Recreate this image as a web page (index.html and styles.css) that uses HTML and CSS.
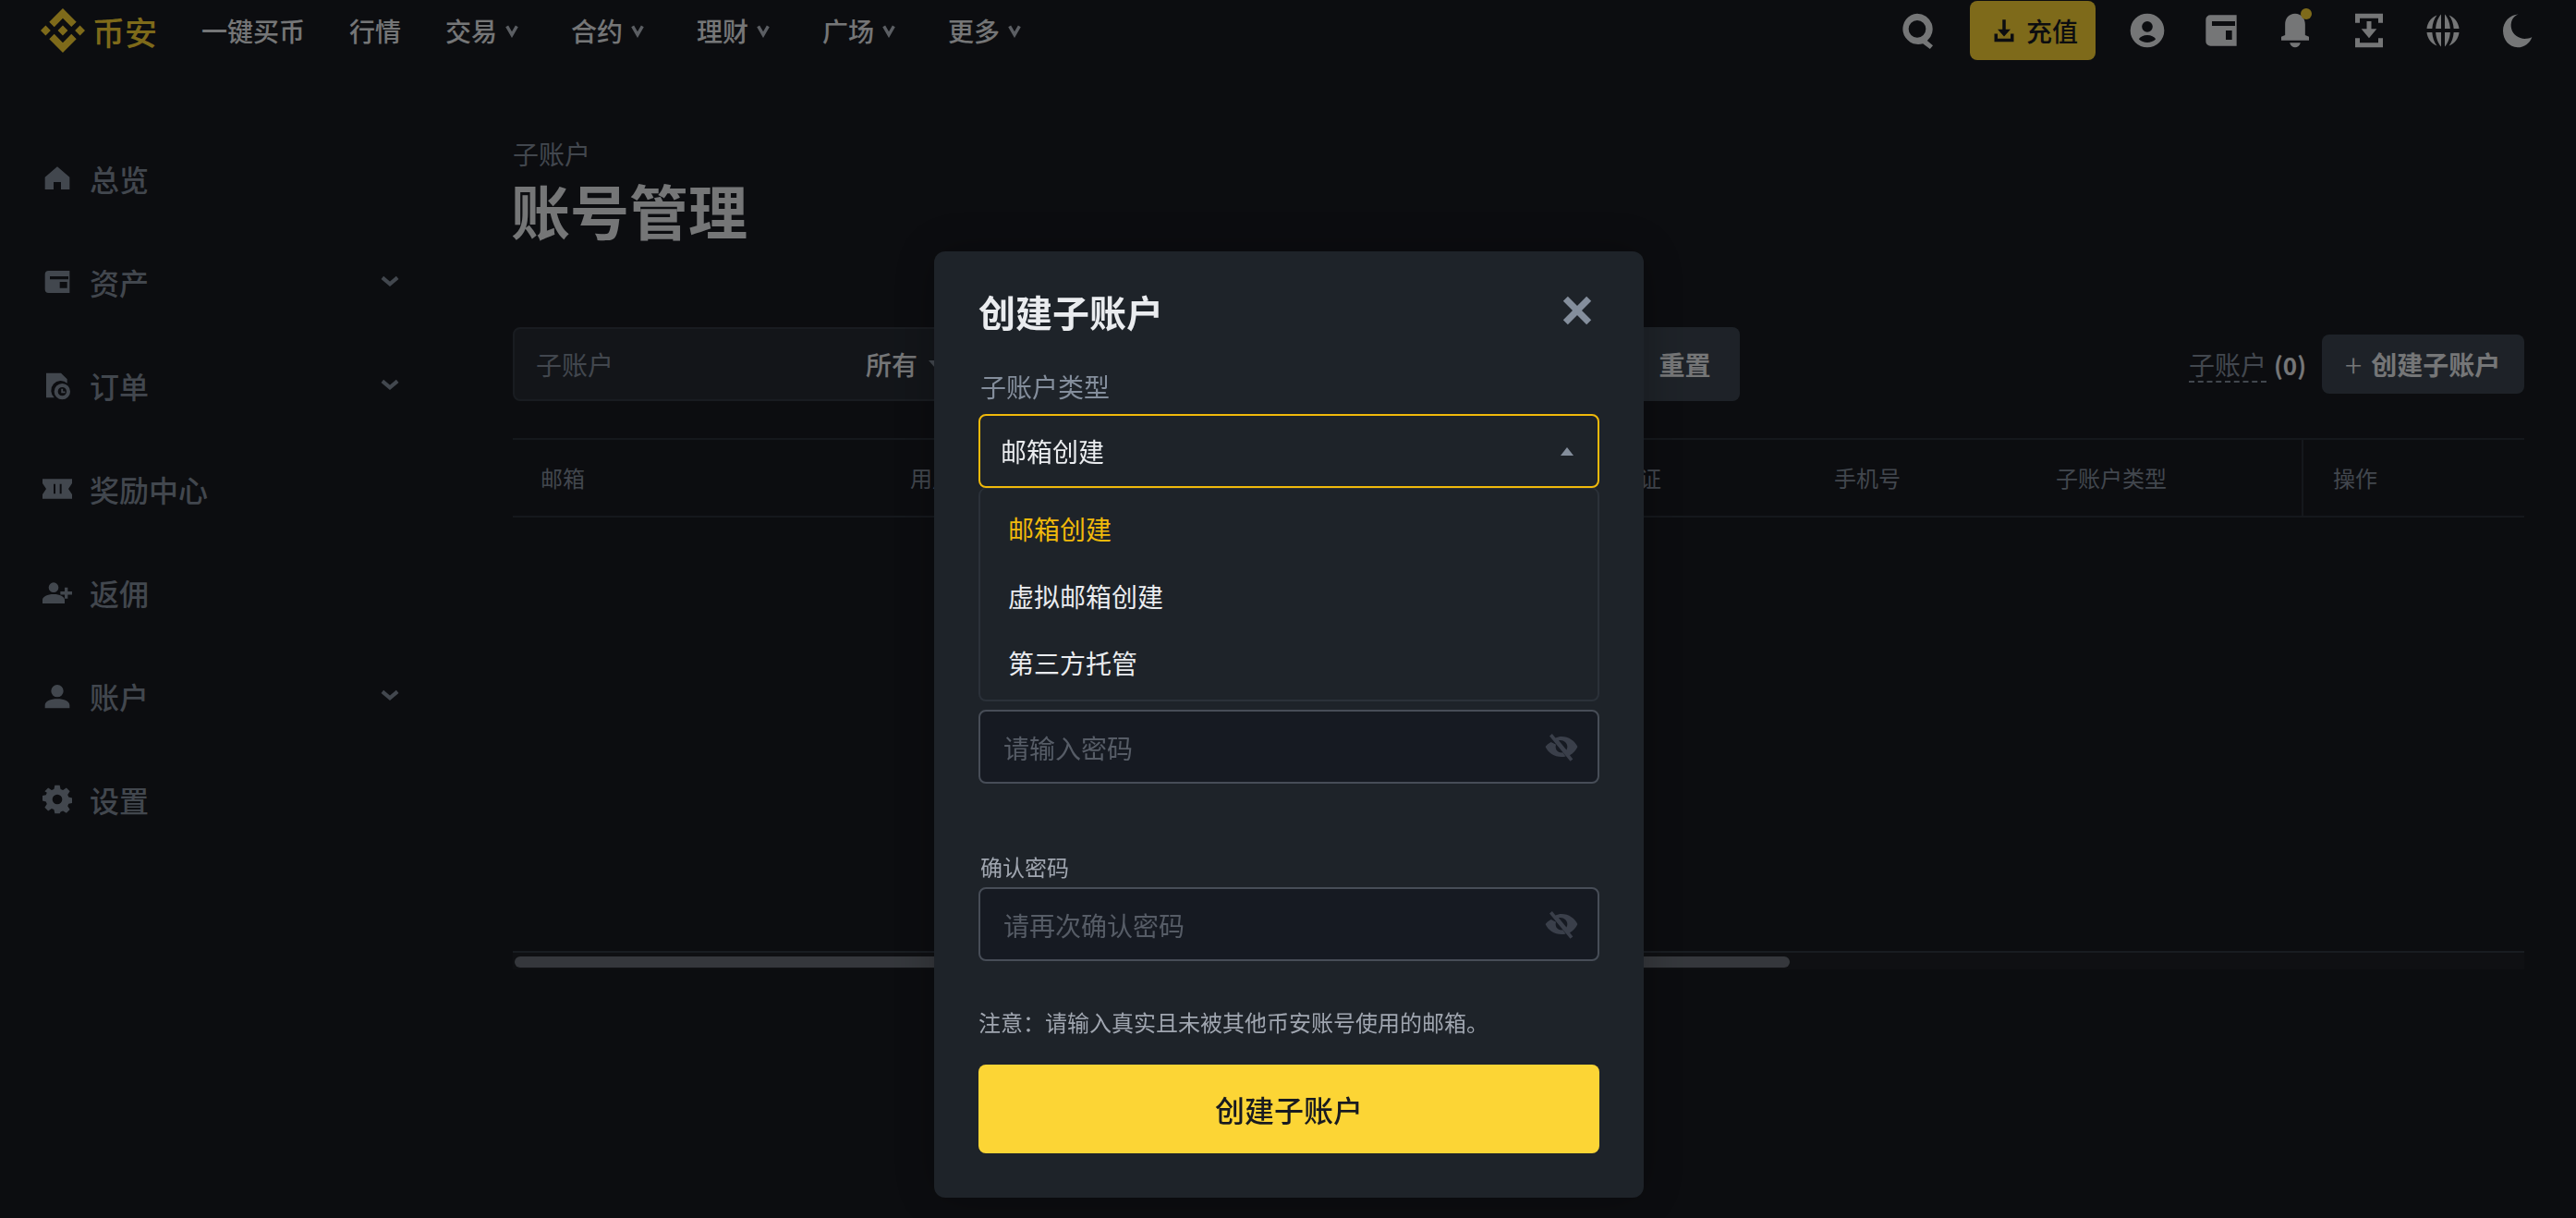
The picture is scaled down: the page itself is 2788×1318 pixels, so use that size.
FILE: index.html
```html
<!DOCTYPE html>
<html lang="zh-CN">
  <head>
    <meta charset="UTF-8" />
    <title>账号管理</title>
    <link rel="stylesheet" href="styles.css">
  </head>
  <body>
    <header class="topBar">
      <a class="brand">
        <svg class="brandIcon" viewBox="0 0 24 24"><path d="M16.624 13.92l2.718 2.716-7.353 7.353-7.353-7.352 2.717-2.717 4.636 4.66 4.635-4.66zm4.637-4.636L24 12l-2.715 2.716L18.568 12l2.693-2.716zm-9.272.001l2.716 2.691-2.716 2.718L9.272 12l2.717-2.715zm-9.272-.001L5.409 12l-2.691 2.692L0 12l2.717-2.716zM11.989.012l7.353 7.329-2.718 2.715-4.635-4.635-4.636 4.659-2.717-2.715L11.989.012z"/></svg>
        <span>币安</span>
      </a>
      <nav class="topNav">
        <a>一键买币</a>
        <a>行情</a>
        <a class="hasMenu">交易<svg viewBox="0 0 12 12"><path d="M2 2.500l4 7 4-7"/></svg></a>
        <a class="hasMenu">合约<svg viewBox="0 0 12 12"><path d="M2 2.500l4 7 4-7"/></svg></a>
        <a class="hasMenu">理财<svg viewBox="0 0 12 12"><path d="M2 2.500l4 7 4-7"/></svg></a>
        <a class="hasMenu">广场<svg viewBox="0 0 12 12"><path d="M2 2.500l4 7 4-7"/></svg></a>
        <a class="hasMenu">更多<svg viewBox="0 0 12 12"><path d="M2 2.500l4 7 4-7"/></svg></a>
      </nav>
      <div class="topTools">
        <svg class="tool toolSearch" viewBox="0 0 24 24"><path fill-rule="evenodd" d="M10.800 1a10 10 0 016.500 17.600l3.700 3.100-1.900 2.300-4.600-3.500A10 10 0 1110.800 1zm0 4.400a5.600 5.600 0 100 11.200 5.600 5.600 0 000-11.200z"/></svg>
        <button class="depositBtn">
          <svg viewBox="0 0 24 24"><path d="M10.500 2h3v9h4.500L12 17.500 6 11h4.500zM3 15h3v4.500h12V15h3v7.500H3z"/></svg>
          充值
        </button>
        <svg class="tool" viewBox="0 0 24 24"><path fill-rule="evenodd" d="M12 1a11 11 0 110 22 11 11 0 010-22zm0 5a3.500 3.500 0 100 7 3.500 3.500 0 000-7zm0 9c-2.500 0-4.500 1-5.500 2.500C8 19 10 19.800 12 19.800s4-.8 5.500-2.300C16.500 16 14.500 15 12 15z"/></svg>
        <svg class="tool" viewBox="0 0 24 24"><path fill-rule="evenodd" d="M2 5a3 3 0 013-3h17v20H5a3 3 0 01-3-3zm4 1v3h15V6zm9 6v6h4v-6z"/></svg>
        <span class="bellWrap">
          <svg class="tool" viewBox="0 0 24 24"><path d="M12 1c4 0 6.500 3 6.500 7v7l2.500 1v2.500H3V16l2.500-1V8c0-4 2.500-7 6.500-7zM8.500 20h7c-.5 2-2 3-3.500 3s-3-1-3.500-3z"/></svg>
          <i class="bellDot"></i>
        </span>
        <svg class="tool" viewBox="0 0 24 24"><path d="M3 1h18v6h-3V4H6v3H3zM3 17h3v3h12v-3h3v6H3zM10.500 6h3v5H17l-5 6-5-6h3.500z"/></svg>
        <svg class="tool" viewBox="0 0 24 24"><path d="M10.800 1.500V10.800H7.300c.2-3.800 1.600-7.300 3.500-9.300zm2.400 0c1.900 2 3.300 5.500 3.500 9.300h-3.500zM5 10.800H1.500c.4-4 3-7.400 6.600-8.700C6.300 4.400 5.200 7.400 5 10.800zm14 0c-.2-3.400-1.300-6.400-3.100-8.700 3.600 1.300 6.200 4.700 6.600 8.700zM10.800 13.200v9.300c-1.900-2-3.300-5.500-3.500-9.300zm2.400 0h3.500c-.2 3.800-1.600 7.300-3.500 9.300zm-11.700 0H5c.2 3.400 1.300 6.400 3.100 8.700-3.600-1.300-6.200-4.700-6.600-8.700zm17.500 0h3.500c-.4 4-3 7.400-6.600 8.700 1.800-2.300 2.900-5.300 3.100-8.700z"/></svg>
        <svg class="tool" viewBox="0 0 24 24"><path d="M13 1.500C9 3 7.500 7 8.500 11c1 4 5 6.800 10 6.300 1.300-.1 2.400-.5 3.300-1.100C20.500 20.300 16.800 23 12.500 23 7 23 3 18 3 12.200 3 6.500 7.500 1.500 13 1.500z"/></svg>
      </div>
    </header>

    <div class="layout">
      <aside class="sideNav">
        <a class="sideItem">
          <svg viewBox="0 0 24 24"><path d="M12 2.500L2 11v10h7v-6h6v6h7V11z"/></svg>
          <span>总览</span>
        </a>
        <a class="sideItem">
          <svg viewBox="0 0 24 24"><path fill-rule="evenodd" d="M2 6a3 3 0 013-3h17v18H5a3 3 0 01-3-3zm4 1.500V10h15V7.500zM14 12v5h6v-5z"/></svg>
          <span>资产</span>
          <svg class="sideArrow" viewBox="0 0 24 24"><path d="M5 8l7 6 7-6"/></svg>
        </a>
        <a class="sideItem">
          <svg viewBox="0 0 24 24"><path fill-rule="evenodd" d="M3 2h12l5 5v3.300A7 7 0 009.600 22H3zM16 10.500a6.500 6.500 0 110 13 6.500 6.500 0 010-13zm0 3a3.500 3.500 0 100 7 3.500 3.500 0 000-7zm-.8 1.300h1.400v2h1.800v1.400h-3.200z"/></svg>
          <span>订单</span>
          <svg class="sideArrow" viewBox="0 0 24 24"><path d="M5 8l7 6 7-6"/></svg>
        </a>
        <a class="sideItem">
          <svg viewBox="0 0 24 24"><path fill-rule="evenodd" d="M0 4h24v3.500L21 12l3 4.500V20H0v-3.500L3 12 0 7.500zm9 4v8h1.500V8zm5 0v8h1.500V8z"/></svg>
          <span>奖励中心</span>
        </a>
        <a class="sideItem">
          <svg viewBox="0 0 24 24"><path d="M9 4a4 4 0 110 8 4 4 0 010-8zM0 21v-3c0-2.500 4-4.500 9-4.500s9 2 9 4.500v3zM18 8h2.500v3.200H24v2.600h-3.500V17H18v-3.200h-3.500v-2.600H18z"/></svg>
          <span>返佣</span>
        </a>
        <a class="sideItem">
          <svg viewBox="0 0 24 24"><path d="M12 3a5 5 0 110 10 5 5 0 010-10zM2 22v-2.500C2 16.500 6.500 14.500 12 14.500s10 2 10 5V22z"/></svg>
          <span>账户</span>
          <svg class="sideArrow" viewBox="0 0 24 24"><path d="M5 8l7 6 7-6"/></svg>
        </a>
        <a class="sideItem">
          <svg viewBox="0 0 24 24"><path fill-rule="evenodd" d="M10 1h4l.7 3.200 1.900.8 2.800-1.800 2.800 2.800L20.400 8.800l.8 1.900 3 .7v4l-3 .7-.8 1.900 1.800 2.800-2.800 2.800-2.800-1.800-1.900.8L14 24h-4l-.7-3.200-1.900-.8-2.800 1.800-2.800-2.800 1.800-2.800-.8-1.900-3-.7v-4l3-.7.8-1.900L1.800 6l2.800-2.800L7.400 5l1.900-.8zM12 8.500a4 4 0 100 8 4 4 0 000-8z" transform="translate(0 -.5)"/></svg>
          <span>设置</span>
        </a>
      </aside>

      <main class="content">
        <div class="crumb">子账户</div>
        <h1 class="pageTitle">账号管理</h1>

        <div class="toolbar">
          <div class="filterBox">
            <span class="filterHint">子账户</span>
            <span class="filterAll">所有<i class="caretDown"></i></span>
          </div>
          <button class="resetBtn">重置</button>
          <div class="toolbarRight">
            <span class="countLabel">子账户</span>
            <span class="countNum">(0)</span>
            <button class="createBtn"><span class="plus">+</span><span>创建子账户</span></button>
          </div>
        </div>

        <div class="tableWrap">
          <div class="tableHead">
            <div>邮箱</div>
            <div>用户名</div>
            <div>身份认证</div>
            <div>手机号</div>
            <div>子账户类型</div>
            <div class="opCol">操作</div>
          </div>
          <div class="tableBody"></div>
          <div class="scrollTrack"><div class="scrollThumb"></div></div>
        </div>
      </main>
    </div>

    <div class="overlay">
      <div class="modal">
        <div class="modalHead">
          <h2>创建子账户</h2>
          <svg class="closeIcon" viewBox="0 0 24 24"><path d="M4 4l16 16M20 4L4 20"/></svg>
        </div>

        <div class="typeField">
          <label class="typeLabel">子账户类型</label>
          <div class="selectBox">
            <span>邮箱创建</span>
            <i class="caretUp"></i>
          </div>
          <ul class="selectMenu">
            <li class="active">邮箱创建</li>
            <li>虚拟邮箱创建</li>
            <li>第三方托管</li>
          </ul>
        </div>

        <div class="formBox formFirst">
          <div class="inputBox">
            <input type="password" placeholder="请输入密码" />
            <svg class="eyeIcon" viewBox="0 0 24 24"><path fill-rule="evenodd" d="M12 5c1.500 0 2.900.4 4.100 1l2.300-2.800 1.800 1.500L6 22l-1.800-1.500 2.100-2.600C4 16.500 2 14.300 1 12c1.800-4 6-7 11-7zm-4 7c0 .8.200 1.500.6 2.200l5.300-6.400C11.300 7 8 9 8 12zm11.200-3.200C20.800 9.700 22.200 10.800 23 12c-1.800 4-6 7-11 7-1 0-2-.1-2.900-.4l2.100-2.600c3 .3 4.800-1.500 4.800-4 0-.5-.1-1-.3-1.400z"/></svg>
          </div>
        </div>
        <div class="formBox">
          <label>确认密码</label>
          <div class="inputBox">
            <input type="password" placeholder="请再次确认密码" />
            <svg class="eyeIcon" viewBox="0 0 24 24"><path fill-rule="evenodd" d="M12 5c1.500 0 2.900.4 4.100 1l2.300-2.800 1.800 1.500L6 22l-1.800-1.500 2.100-2.600C4 16.500 2 14.300 1 12c1.800-4 6-7 11-7zm-4 7c0 .8.200 1.500.6 2.200l5.300-6.400C11.300 7 8 9 8 12zm11.200-3.200C20.800 9.700 22.200 10.800 23 12c-1.800 4-6 7-11 7-1 0-2-.1-2.900-.4l2.100-2.600c3 .3 4.800-1.500 4.800-4 0-.5-.1-1-.3-1.400z"/></svg>
          </div>
        </div>

        <p class="note">注意&#xFF1A;请输入真实且未被其他币安账号使用的邮箱。</p>
        <button class="submitBtn">创建子账户</button>
      </div>
    </div>
  </body>
</html>
```

FILE: styles.css
```css
html {
  font-family: 'Noto Sans CJK SC', sans-serif;
}
body {
  margin: 0;
  width: 2788px;
  height: 1318px;
  overflow: hidden;
  background-color: #181a20;
  color: #eaecef;
}
a {
  color: inherit;
}
button {
  font-family: inherit;
  border: none;
}
h1,
h2,
p,
ul {
  margin: 0;
  padding: 0;
}

/* top bar */
.topBar {
  display: flex;
  align-items: center;
  height: 66px;
  padding-left: 44px;
}
.brand {
  display: flex;
  align-items: center;
  gap: 8px;
  color: #fcd535;
  font-size: 35px;
  font-weight: 500;
  width: 174px;
}
.brandIcon {
  width: 48px;
  height: 48px;
  fill: #fcd535;
}
.topNav {
  display: flex;
  align-items: center;
  gap: 48px;
  font-size: 28px;
  font-weight: 500;
}
.topNav a {
  display: flex;
  align-items: center;
}
.hasMenu svg {
  width: 16px;
  height: 16px;
  margin-left: 8px;
  margin-right: 8px;
  fill: none;
  stroke: #b7bdc6;
  stroke-width: 2.500;
}
.topTools {
  display: flex;
  align-items: center;
  margin-left: auto;
  padding-right: 44px;
  gap: 40px;
}
.tool {
  display: block;
  width: 40px;
  height: 40px;
  fill: #eaecef;
}
.toolSearch {
  margin-right: -5px;
}
.depositBtn {
  display: flex;
  align-items: center;
  justify-content: center;
  gap: 10px;
  width: 136px;
  height: 64px;
  margin-right: -4px;
  padding: 0 0 0 4px;
  background-color: #fcd535;
  border-radius: 8px;
  color: #181a20;
  font-size: 28px;
  font-weight: 500;
}
.depositBtn svg {
  width: 28px;
  height: 28px;
  fill: #181a20;
}
.bellWrap {
  position: relative;
  display: block;
}
.bellDot {
  position: absolute;
  top: -4px;
  right: 2px;
  width: 12px;
  height: 12px;
  border-radius: 50%;
  background-color: #fcd535;
}

.layout {
  display: flex;
}

/* left menu */
.sideNav {
  flex: 0 0 555px;
  padding-top: 71px;
  color: #848e9c;
}
.sideItem {
  display: flex;
  align-items: center;
  height: 112px;
  padding-left: 46px;
  font-size: 32px;
  font-weight: 500;
}
.sideItem > svg:first-child {
  width: 32px;
  height: 32px;
  margin-right: 19px;
  fill: #848e9c;
}
.sideArrow {
  width: 28px;
  height: 28px;
  margin-left: auto;
  margin-right: 119px;
  fill: none;
  stroke: #848e9c;
  stroke-width: 3.500;
}

/* main area */
.content {
  flex: 1;
  padding: 81px 56px 0 0;
}
.crumb {
  font-size: 28px;
  line-height: 38px;
  color: #848e9c;
}
.pageTitle {
  margin-left: -2px;
  font-size: 64px;
  line-height: 82px;
  font-weight: 700;
}
.toolbar {
  display: flex;
  align-items: center;
  margin-top: 87px;
  gap: 16px;
}
.filterBox {
  display: flex;
  align-items: center;
  box-sizing: border-box;
  width: 1199px;
  height: 80px;
  padding: 0 23px;
  background-color: #262b33;
  border: 2px solid #333942;
  border-radius: 8px;
  font-size: 28px;
}
.filterHint {
  width: 357px;
  color: #848e9c;
}
.filterAll {
  display: flex;
  align-items: center;
  font-weight: 500;
}
.caretDown {
  width: 0;
  height: 0;
  margin-left: 12px;
  border-left: 7px solid transparent;
  border-right: 7px solid transparent;
  border-top: 8px solid #848e9c;
}
.resetBtn {
  width: 113px;
  height: 80px;
  padding: 0 6px 0 0;
  background-color: #3c4550;
  border-radius: 8px;
  color: #eaecef;
  font-size: 28px;
  font-weight: 600;
}
.toolbarRight {
  display: flex;
  align-items: center;
  margin-left: auto;
  font-size: 28px;
}
.countLabel {
  color: #848e9c;
  border-bottom: 2px dashed #848e9c;
  line-height: 34px;
  padding-bottom: 1px;
  margin-top: 3px;
}
.countNum {
  margin-left: 8px;
  margin-right: 17px;
  font-size: 26px;
  font-weight: 600;
}
.createBtn {
  display: flex;
  align-items: center;
  gap: 10px;
  height: 64px;
  width: 219px;
  padding: 0 0 0 25px;
  background-color: #3c4550;
  border-radius: 8px;
  color: #eaecef;
  font-size: 28px;
  font-weight: 600;
  white-space: nowrap;
}
.plus {
  font-size: 34px;
  font-weight: 300;
  line-height: 1;
}

/* table */
.tableWrap {
  margin-top: 40px;
}
.tableHead {
  display: grid;
  grid-template-columns: 400px 717px 283px 240px 296px 1fr;
  height: 86px;
  box-sizing: border-box;
  border-top: 2px solid #2b3139;
  border-bottom: 2px solid #2b3139;
  font-size: 24px;
  color: #848e9c;
}
.tableHead div {
  display: flex;
  align-items: center;
  padding: 0 0 2px 30px;
}
.tableHead .opCol {
  padding-left: 32px;
  border-left: 2px solid #2b3139;
}
.tableBody {
  height: 469px;
  border-bottom: 2px solid #333942;
}
.scrollTrack {
  height: 18px;
  padding: 4px 2px 0;
  box-sizing: border-box;
  background-color: #1e2026;
}
.scrollThumb {
  width: 1380px;
  height: 12px;
  border-radius: 6px;
  background-color: #6a6f78;
}

/* dialog */
.overlay {
  position: fixed;
  top: 0;
  left: 0;
  right: 0;
  bottom: 0;
  display: flex;
  justify-content: center;
  align-items: flex-start;
  padding: 272px 0 0 2px;
  background-color: rgba(0, 0, 0, 0.5);
}
.modal {
  box-sizing: border-box;
  width: 768px;
  height: 1024px;
  padding: 33px 48px 48px;
  background-color: #1e2329;
  border-radius: 12px;
  box-shadow: 0 0 48px rgba(0, 0, 0, 0.25);
}
.modalHead {
  display: flex;
  align-items: center;
  justify-content: space-between;
  height: 64px;
}
.modalHead h2 {
  font-size: 40px;
  font-weight: 600;
}
.closeIcon {
  width: 38px;
  height: 38px;
  margin-right: 5px;
  margin-top: -2px;
  fill: none;
  stroke: #848e9c;
  stroke-width: 4.500;
}
.typeField {
  position: relative;
  padding-top: 29px;
}
.typeLabel {
  display: block;
  margin-bottom: 10px;
  padding-left: 2px;
  font-size: 28px;
  line-height: 40px;
  color: #848e9c;
}
.selectBox {
  display: flex;
  align-items: center;
  justify-content: space-between;
  box-sizing: border-box;
  height: 80px;
  padding: 0 26px 0 22px;
  border: 2px solid #f0b90b;
  border-radius: 8px;
  font-size: 28px;
}
.caretUp {
  width: 0;
  height: 0;
  border-left: 7px solid transparent;
  border-right: 7px solid transparent;
  border-bottom: 9px solid #848e9c;
}
.selectMenu {
  position: absolute;
  top: 100%;
  left: 0;
  right: 0;
  z-index: 2;
  box-sizing: border-box;
  height: 231px;
  padding-top: 7px;
  list-style: none;
  background-color: #1e2329;
  border: 2px solid #2b3139;
  border-top-width: 1px;
  border-radius: 8px;
  font-size: 28px;
}
.selectMenu li {
  display: flex;
  align-items: center;
  height: 72.500px;
  padding-left: 30px;
}
.selectMenu .active {
  color: #f0b90b;
}
.formBox {
  margin-top: 74px;
}
.formFirst {
  margin-top: 240px;
}
.formBox label {
  display: block;
  margin-bottom: 6px;
  padding-left: 2px;
  font-size: 24px;
  line-height: 32px;
  color: #a0a6b0;
}
.inputBox {
  display: flex;
  align-items: center;
  box-sizing: border-box;
  height: 80px;
  padding: 2px 20px 0 25px;
  background-color: #161a22;
  border: 2px solid #474d57;
  border-radius: 8px;
}
.inputBox input {
  flex: 1;
  min-width: 0;
  padding: 0;
  border: none;
  outline: none;
  background: none;
  font-family: inherit;
  font-size: 28px;
  color: #eaecef;
}
.inputBox input::placeholder {
  color: #565c66;
}
.eyeIcon {
  width: 38px;
  height: 38px;
  margin-top: -2px;
  fill: #3a3f4a;
  transform: scaleX(-1);
}
.note {
  margin-top: 50px;
  font-size: 24px;
  line-height: 32px;
  color: #a0a6b0;
}
.submitBtn {
  display: block;
  width: 100%;
  height: 96px;
  margin-top: 30px;
  background-color: #fcd535;
  border-radius: 8px;
  color: #181a20;
  font-size: 32px;
  font-weight: 500;
}
```
